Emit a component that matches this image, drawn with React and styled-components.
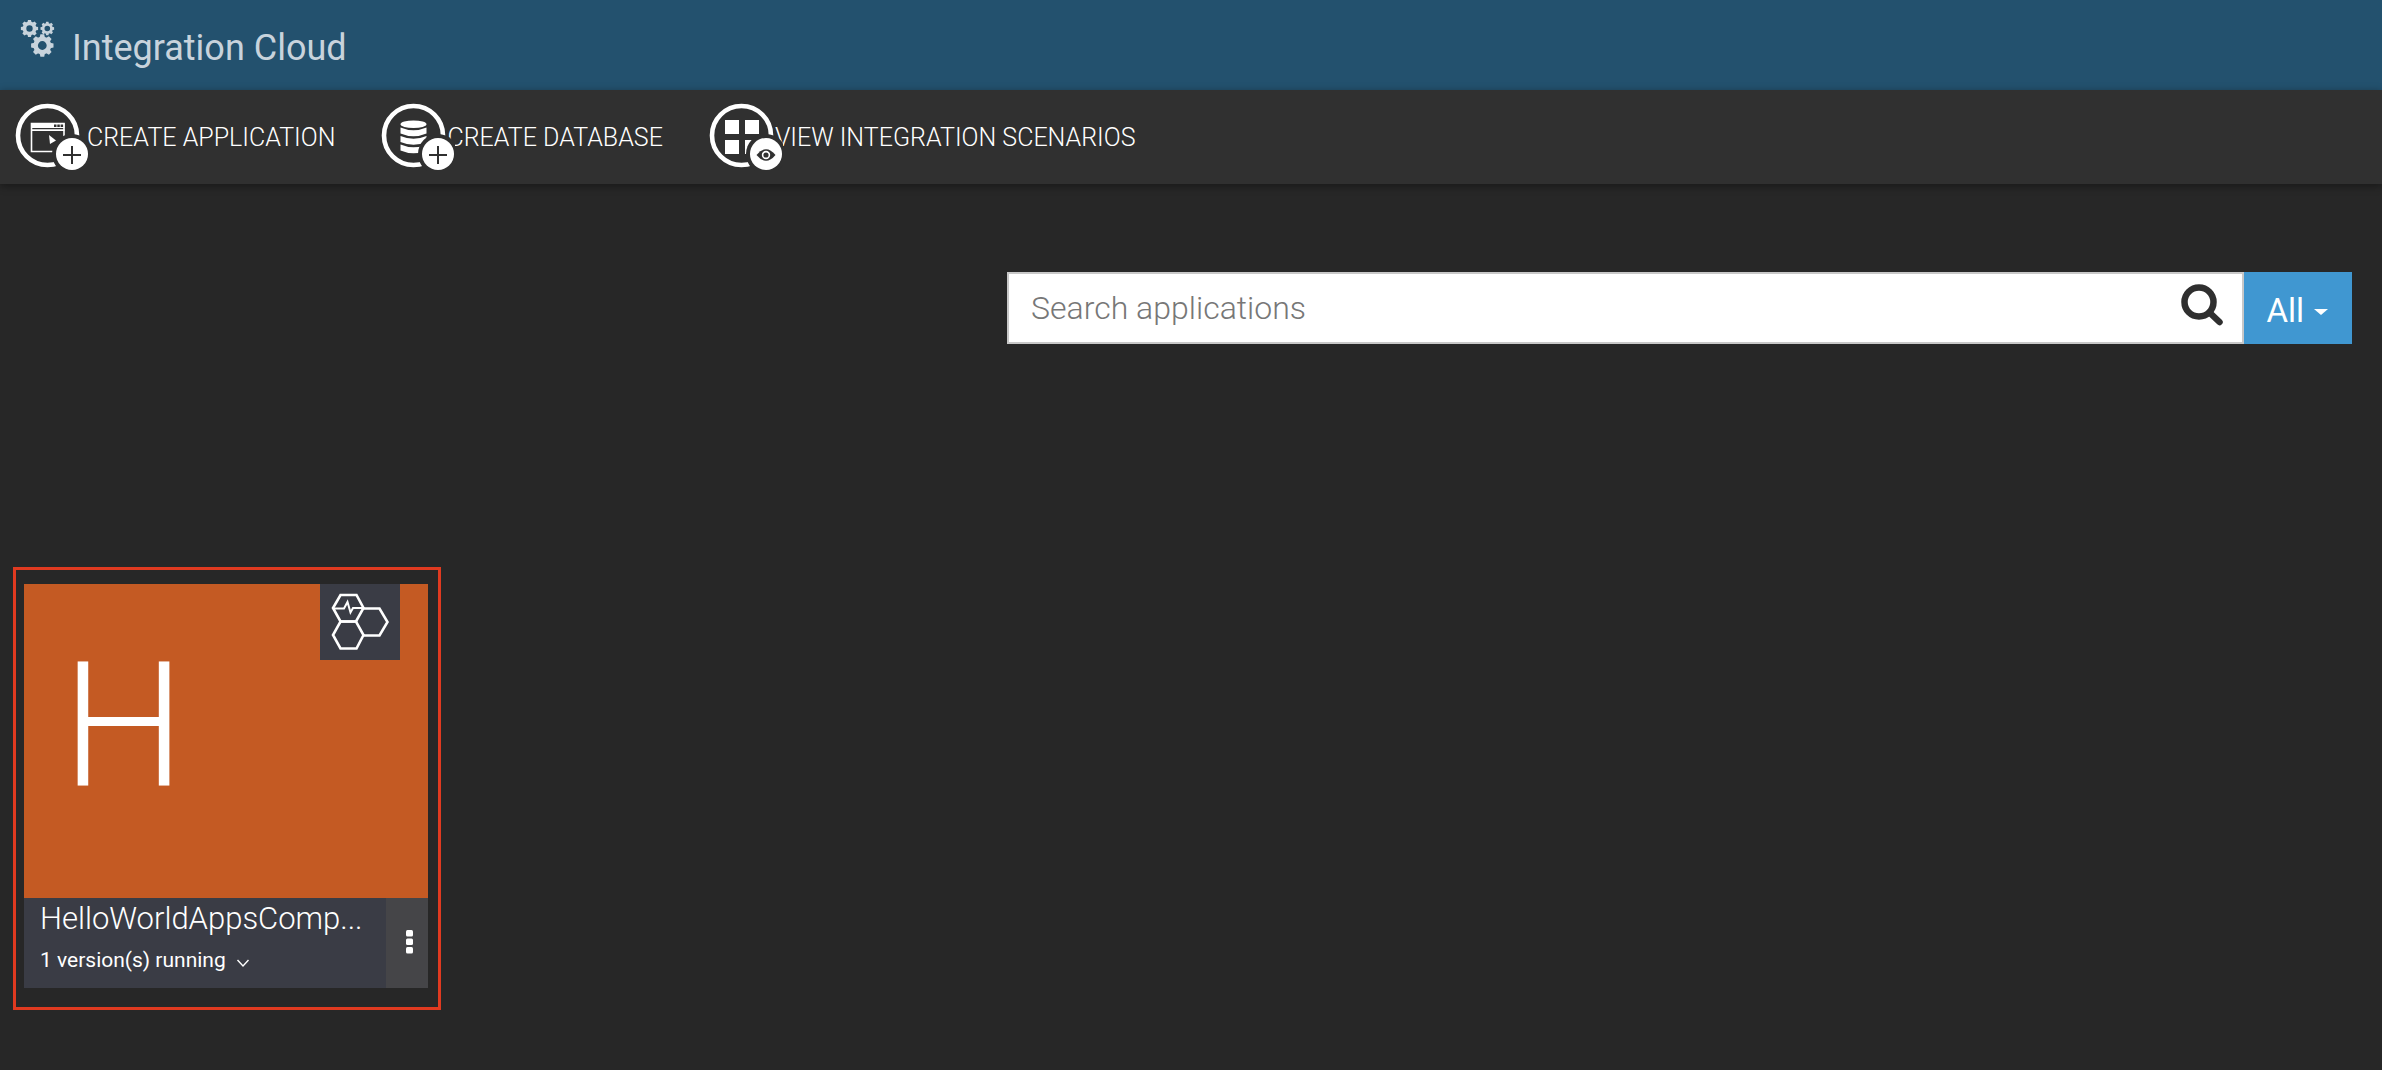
import React from 'react';
import styled, { createGlobalStyle } from 'styled-components';

const GlobalStyle = createGlobalStyle`
  *, *::before, *::after { box-sizing: border-box; }
  html, body, #root { min-height: 100%; }
  body {
    margin: 0;
    background: #272727;
    color: #fff;
    font-family: Roboto, "Liberation Sans", sans-serif;
    font-weight: 300;
  }
  button, input { font: inherit; color: inherit; border: 0; border-radius: 0; margin: 0; padding: 0; }
  button { background: none; cursor: pointer; }
`;

const Header = styled.header`
  display: flex;
  align-items: flex-start;
  gap: 17px;
  height: 90px;
  padding: 20px 20px 0;
  background: #23516e;
  color: #c8d3dc;
`;

const Title = styled.h1`
  margin: 7px 0 0;
  font-size: 36px;
  line-height: 42px;
  font-weight: 400;
`;

const Toolbar = styled.nav`
  display: flex;
  align-items: center;
  gap: 46px;
  height: 94px;
  padding: 0 15px;
  background: #303030;
  box-shadow: 0 2px 8px rgba(0, 0, 0, 0.4);
`;

const ToolButton = styled.button`
  display: flex;
  align-items: center;
  font-size: 25px;
  line-height: 32px;
  text-transform: uppercase;
  white-space: nowrap;

  svg {
    position: relative;
    flex: none;
    margin-right: -${(p) => p.$overlap}px;
  }
`;

const ToolLabel = styled.span`
  padding-top: 2px;
`;

const Main = styled.main`
  padding: 88px 30px 59px 13px;
`;

const SearchForm = styled.form`
  display: flex;
  width: 57.5%;
  height: 72px;
  margin-left: auto;
`;

const SearchField = styled.div`
  display: flex;
  flex: 1;
  min-width: 0;
  border: 2px solid #c8c8c8;
  background: #fff;
  color: #2f2f2f;
`;

const SearchInput = styled.input`
  flex: 1;
  min-width: 0;
  padding: 0 22px;
  background: transparent;
  font-size: 32px;
  outline: none;

  &::placeholder { color: #777; opacity: 1; }
`;

const SearchButton = styled.button`
  display: flex;
  align-items: center;
  padding: 0 18px 6px;
`;

const FilterButton = styled.button`
  display: flex;
  align-items: center;
  gap: 10px;
  padding: 4px 24px 0 22px;
  background: #4097d1;
  font-size: 33px;
  font-weight: 400;
`;

const Caret = styled.span`
  margin-top: 4px;
  border: 7px solid transparent;
  border-top: 6px solid #fff;
  border-bottom: 0;
`;

const CardFrame = styled.section`
  width: fit-content;
  margin-top: 223px;
  padding: 14px 10px 19px 8px;
  border: 3px solid #e03a20;
`;

const Card = styled.article`
  width: 404px;
`;

const Tile = styled.div`
  display: flex;
  justify-content: space-between;
  align-items: flex-start;
  height: 314px;
  padding: 0 28px 0 38px;
  background: #c45a23;
`;

const Initial = styled.span`
  margin-top: 41px;
  font-size: 174px;
  line-height: 204px;
`;

const TypeBadge = styled.span`
  display: grid;
  place-items: center;
  width: 80px;
  height: 76px;
  background: #3a3c45;
`;

const CardFooter = styled.footer`
  display: flex;
  height: 90px;
  background: #3a3c45;
`;

const CardInfo = styled.div`
  flex: 1;
  min-width: 0;
  padding: 1px 16px 0;
`;

const AppName = styled.h2`
  margin: 0;
  font-size: 31px;
  line-height: 40px;
  font-weight: 300;
  white-space: nowrap;
`;

const VersionButton = styled.button`
  display: flex;
  align-items: center;
  gap: 10px;
  font-size: 21px;
  line-height: 42px;
  font-weight: 400;
`;

const MenuButton = styled.button`
  display: grid;
  place-items: center;
  width: 42px;
  padding: 0 0 2px 6px;
  background: #454548;
`;

function Gear({ cx, cy, r, hole, teeth = 8 }) {
  return (
    <g transform={`translate(${cx} ${cy})`}>
      <circle r={(r * 0.8 + hole) / 2} fill="none" stroke="currentColor" strokeWidth={r * 0.8 - hole} />
      {Array.from({ length: teeth }, (_, i) => (
        <path
          key={i}
          fill="currentColor"
          transform={`rotate(${(i * 360) / teeth})`}
          d={`M${-r * 0.24} ${-r * 0.7}L${-r * 0.17} ${-r}H${r * 0.17}L${r * 0.24} ${-r * 0.7}Z`}
        />
      ))}
    </g>
  );
}

const GearsIcon = () => (
  <svg width="35" height="38" viewBox="0 0 35 38" aria-hidden="true">
    <Gear cx={9.5} cy={8.5} r={8.6} hole={3.2} />
    <Gear cx={27.3} cy={8.5} r={6.8} hole={2.8} />
    <Gear cx={22.3} cy={25.5} r={11.2} hole={4.4} />
  </svg>
);

const BadgedIcon = ({ children, badge }) => (
  <svg width="74" height="68" viewBox="0 0 74 68" aria-hidden="true">
    <circle cx="32.5" cy="32.5" r="29.5" fill="none" stroke="#fff" strokeWidth="4.6" />
    {children}
    <circle cx="57" cy="51" r="20" fill="#303030" />
    <circle cx="57" cy="51" r="16" fill="#fff" />
    {badge}
  </svg>
);

const Plus = () => <path d="M48 52H66M57 43V61" stroke="#303030" strokeWidth="2" />;

const Eye = () => (
  <g>
    <path d="M47.5 52Q57 40.5 66.5 52Q57 63.5 47.5 52Z" fill="#303030" />
    <circle cx="57" cy="52" r="3.4" fill="none" stroke="#fff" strokeWidth="1.6" />
  </g>
);

const WindowIcon = () => (
  <g>
    <path d="M16.5 20.5H49V48.5H16.5Z" fill="none" stroke="#fff" strokeWidth="1.6" />
    <path d="M16 20H49.5V25H16ZM16 26.2H49.5V28H16Z" fill="#fff" />
    <path d="M39 21.6H41.5V24H39ZM42.3 21.6H44.8V24H42.3ZM45.6 21.6H48.1V24H45.6Z" fill="#303030" />
    <path d="M34 32L35 41L41 37.5Z" fill="#fff" />
  </g>
);

const DatabaseIcon = () => (
  <g fill="#fff">
    <ellipse cx="32.5" cy="21.3" rx="13" ry="3.8" />
    <path d="M19.5 24.5Q32.5 30 45.5 24.5V30.5Q32.5 36 19.5 30.5Z" />
    <path d="M19.5 33Q32.5 38.5 45.5 33V39Q32.5 44.5 19.5 39Z" />
    <path d="M19.5 41.5Q32.5 47 45.5 41.5V47.5Q32.5 53 19.5 47.5Z" />
  </g>
);

const GridIcon = () => (
  <path fill="#fff" d="M16 17H30V31H16ZM36 17H50V31H36ZM16 37H30V51H16ZM36 37H50V51H36Z" />
);

const SearchIcon = () => (
  <svg width="44" height="44" viewBox="0 0 44 44" aria-hidden="true">
    <circle cx="19" cy="19" r="14.5" fill="none" stroke="currentColor" strokeWidth="6.5" />
    <path d="M30 30L39.5 39" stroke="currentColor" strokeWidth="6.5" strokeLinecap="round" />
  </svg>
);

const HexagonsIcon = () => (
  <svg width="58" height="58" viewBox="0 0 58 58" fill="none" stroke="#fff" strokeWidth="2.6" aria-hidden="true">
    <path d="M9.5 2H25.5L32.5 15L25 28.5H9.5L2 15Z" />
    <path d="M9.5 28.5H25L32.5 42L25.5 55.5H9.5L2 42Z" />
    <path d="M32.5 15.5H48.5L56.5 29L48.5 42.5H32.5" />
    <path d="M2 15.5H13L16.5 9L19.5 19.5L22 15H32.5" strokeWidth="2" />
  </svg>
);

const ChevronIcon = () => (
  <svg width="14" height="22" viewBox="0 0 14 22" aria-hidden="true">
    <path d="M1.5 11L7 17L12.5 11" fill="none" stroke="#fff" strokeWidth="1.4" />
  </svg>
);

const DotsIcon = () => (
  <svg width="8" height="26" viewBox="0 0 8 26" fill="#fff" aria-hidden="true">
    <rect y="1" width="7" height="6.5" rx="1.5" />
    <rect y="9.5" width="7" height="6.5" rx="1.5" />
    <rect y="18" width="7" height="6.5" rx="1.5" />
  </svg>
);

export default function App() {
  return (
    <>
      <GlobalStyle />
      <Header>
        <GearsIcon />
        <Title>Integration Cloud</Title>
      </Header>
      <Toolbar>
        <ToolButton type="button" $overlap={2}>
          <BadgedIcon badge={<Plus />}><WindowIcon /></BadgedIcon>
          <ToolLabel>Create Application</ToolLabel>
        </ToolButton>
        <ToolButton type="button" $overlap={8}>
          <BadgedIcon badge={<Plus />}><DatabaseIcon /></BadgedIcon>
          <ToolLabel>Create Database</ToolLabel>
        </ToolButton>
        <ToolButton type="button" $overlap={8}>
          <BadgedIcon badge={<Eye />}><GridIcon /></BadgedIcon>
          <ToolLabel>View Integration Scenarios</ToolLabel>
        </ToolButton>
      </Toolbar>
      <Main>
        <SearchForm role="search" onSubmit={(e) => e.preventDefault()}>
          <SearchField>
            <SearchInput type="text" aria-label="Search applications" placeholder="Search applications" />
            <SearchButton type="submit" aria-label="Search"><SearchIcon /></SearchButton>
          </SearchField>
          <FilterButton type="button" aria-haspopup="listbox">
            All
            <Caret />
          </FilterButton>
        </SearchForm>
        <CardFrame>
          <Card>
            <Tile>
              <Initial>H</Initial>
              <TypeBadge><HexagonsIcon /></TypeBadge>
            </Tile>
            <CardFooter>
              <CardInfo>
                <AppName>HelloWorldAppsComp...</AppName>
                <VersionButton type="button">
                  1 version(s) running
                  <ChevronIcon />
                </VersionButton>
              </CardInfo>
              <MenuButton type="button" aria-label="Application menu"><DotsIcon /></MenuButton>
            </CardFooter>
          </Card>
        </CardFrame>
      </Main>
    </>
  );
}
